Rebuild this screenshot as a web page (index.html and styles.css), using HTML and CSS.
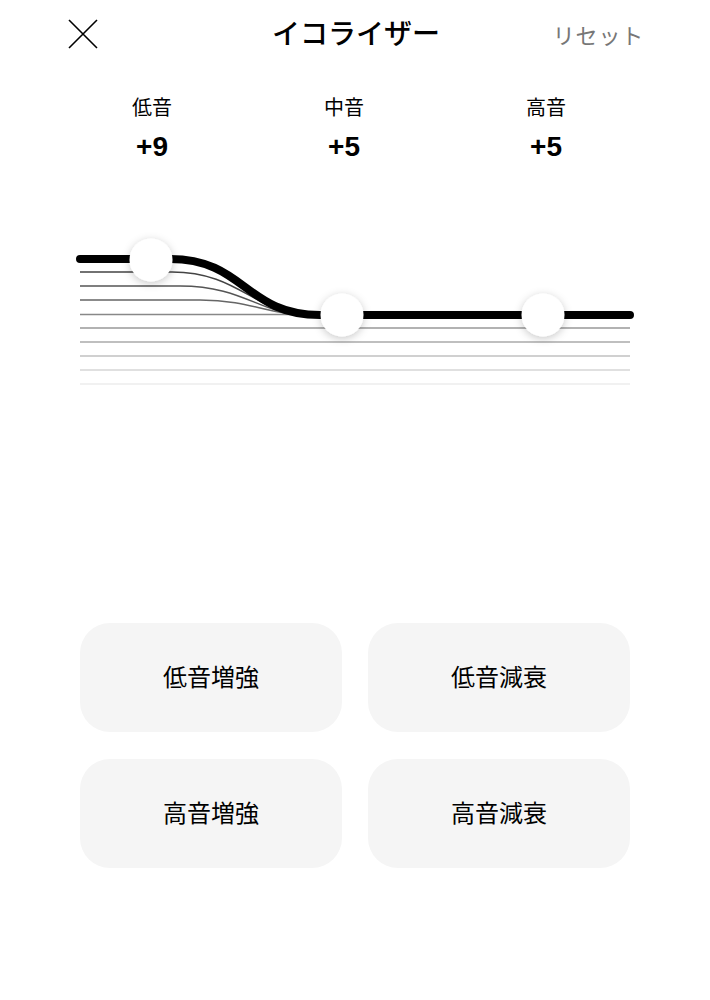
FILE: index.html
```html
<!DOCTYPE html>
<html lang="ja">
<head>
<meta charset="utf-8">
<title>イコライザー</title>
<link rel="stylesheet" href="styles.css">
</head>
<body>
<div class="screen">
  <header class="topbar">
    <button class="close" aria-label="閉じる">
      <svg width="30" height="30" viewBox="0 0 30 30"><path d="M1 1 L29 29 M29 1 L1 29" stroke="#000" stroke-width="1.6" fill="none"/></svg>
    </button>
    <h1 class="title">イコライザー</h1>
    <span class="reset">リセット</span>
  </header>

  <section class="bands">
    <div class="band"><div class="band-label">低音</div><div class="band-value">+9</div></div>
    <div class="band"><div class="band-label">中音</div><div class="band-value">+5</div></div>
    <div class="band"><div class="band-label">高音</div><div class="band-value">+5</div></div>
  </section>

  <section class="chart">
    <svg width="590" height="170" viewBox="-20 0 590 170">
      <defs>
        <filter id="knobShadow" x="-60%" y="-60%" width="220%" height="220%">
          <feDropShadow dx="0" dy="2" stdDeviation="4" flood-color="#000" flood-opacity="0.22"/>
        </filter>
      </defs>
      <g fill="none" stroke-width="1.5">
        <path d="M0 154 H550" stroke="#ececec"/>
        <path d="M0 140 H550" stroke="#d6d6d6"/>
        <path d="M0 126 H550" stroke="#c0c0c0"/>
        <path d="M0 112 H550" stroke="#aaa"/>
        <path d="M0 98 H550" stroke="#999"/>
        <path d="M0 84.5 H550" stroke="#888"/>
        <path d="M0 70 H120 C170 70 190 85 225 85" stroke="#666"/>
        <path d="M0 56 H100 C165 56 180 85 228 85" stroke="#555"/>
        <path d="M0 42 H92 C160 42 175 85 232 85" stroke="#444"/>
      </g>
      <path d="M0 29 H90 C165 29 165 85 240 85 H550" fill="none" stroke="#000" stroke-width="8" stroke-linecap="round"/>
      <g fill="#fff" filter="url(#knobShadow)">
        <circle cx="71" cy="30" r="21.5"/>
        <circle cx="262" cy="85" r="21.5"/>
        <circle cx="463" cy="85" r="21.5"/>
      </g>
    </svg>
  </section>

  <section class="presets">
    <button class="preset">低音増強</button>
    <button class="preset">低音減衰</button>
    <button class="preset">高音増強</button>
    <button class="preset">高音減衰</button>
  </section>
</div>
</body>
</html>
```

FILE: styles.css
```css
* { box-sizing: border-box; }
html, body { margin: 0; padding: 0; background: #fff; }
body {
  font-family: "Noto Sans CJK JP", "Noto Sans", sans-serif;
  color: #000;
  width: 710px;
}
.screen { width: 710px; }

.topbar {
  display: grid;
  grid-template-columns: 1fr auto 1fr;
  align-items: center;
  height: 68px;
  padding: 0 66px 0 68px;
}
.close {
  justify-self: start;
  border: 0;
  background: none;
  padding: 0;
  width: 30px;
  height: 30px;
  display: block;
}
.close svg { display: block; }
.title {
  margin: 0;
  font-size: 28px;
  font-weight: 500;
  line-height: 40px;
  letter-spacing: 0;
  margin-top: -4px;
}
.reset {
  justify-self: end;
  font-size: 22px;
  color: #777;
  line-height: 30px;
  letter-spacing: 0.8px;
}

.bands {
  display: flex;
  padding-left: 112px;
  padding-top: 25px;
}
.band { width: 80px; text-align: center; }
.band + .band { margin-left: 112px; }
.band:last-child { margin-left: 122px; }
.band-label {
  font-size: 20px;
  line-height: 28px;
}
.band-value {
  font-family: "Liberation Sans", Arial, sans-serif;
  font-weight: 700;
  font-size: 28px;
  line-height: 32px;
  margin-top: 10px;
}

.chart {
  margin-top: 67px;
  padding-left: 60px;
  height: 170px;
}
.chart svg { display: block; overflow: visible; }

.presets {
  display: grid;
  grid-template-columns: 262px 262px;
  column-gap: 26px;
  row-gap: 27px;
  padding: 0 80px;
  margin-top: 223px;
}
.preset {
  height: 109px;
  border: 0;
  border-radius: 30px;
  background: #f5f5f5;
  font-family: "Noto Sans CJK JP", sans-serif;
  font-size: 24px;
  line-height: 1;
  color: #000;
  padding: 0 0 4px;
}
```
